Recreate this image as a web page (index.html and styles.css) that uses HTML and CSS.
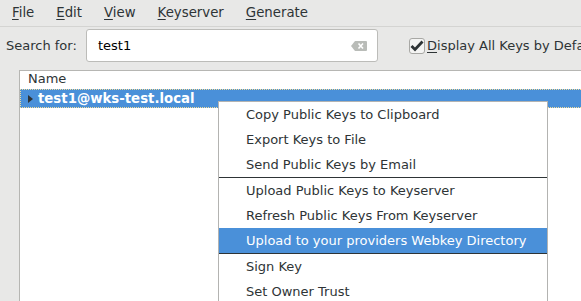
FILE: index.html
```html
<!DOCTYPE html>
<html lang="en">
<head>
    <meta charset="UTF-8">
    <title>Key Manager</title>
    <link rel="stylesheet" href="styles.css">
</head>
<body>

<div class="window">
    <div class="menubar">
        <span class="menu-item"><u>F</u>ile</span>
        <span class="menu-item"><u>E</u>dit</span>
        <span class="menu-item"><u>V</u>iew</span>
        <span class="menu-item"><u>K</u>eyserver</span>
        <span class="menu-item"><u>G</u>enerate</span>
    </div>

    <div class="search-row">
        <span class="search-label">Search for:</span>
        <div class="search-box">
            <span class="search-text">test1</span>
            <svg class="clear-icon" width="16" height="10" viewBox="0 0 16 10">
                <path d="M4 0 H15 a1 1 0 0 1 1 1 V9 a1 1 0 0 1 -1 1 H4 L0 5 Z" fill="#b9bcb8"/>
                <path d="M7.5 2.5 L12 7.5 M12 2.5 L7.5 7.5" stroke="#fff" stroke-width="1.6"/>
            </svg>
        </div>
        <label class="check">
            <span class="check-box">
                <svg width="14" height="12" viewBox="0 0 14 12">
                    <path d="M1.5 6 L5 9.5 L12.5 1.5" fill="none" stroke="#2e3436" stroke-width="2.8"/>
                </svg>
            </span>
            <span><u>D</u>isplay All Keys by Default</span>
        </label>
    </div>

    <div class="tree">
        <div class="tree-header">Name</div>
        <div class="tree-row selected">
            <span class="expander"></span>
            <span class="row-text">test1@wks-test.local</span>
        </div>
    </div>

    <div class="context-menu">
        <div class="ctx-item">Copy Public Keys to Clipboard</div>
        <div class="ctx-item">Export Keys to File</div>
        <div class="ctx-item">Send Public Keys by Email</div>
        <div class="ctx-sep"></div>
        <div class="ctx-item">Upload Public Keys to Keyserver</div>
        <div class="ctx-item">Refresh Public Keys From Keyserver</div>
        <div class="ctx-item active">Upload to your providers Webkey Directory</div>
        <div class="ctx-sep"></div>
        <div class="ctx-item">Sign Key</div>
        <div class="ctx-item">Set Owner Trust</div>
    </div>
</div>

</body>
</html>
```

FILE: styles.css
```css
* {
    margin: 0;
    padding: 0;
    box-sizing: border-box;
}

body {
    width: 581px;
    height: 301px;
    overflow: hidden;
    background-color: #e8e8e7;
    font-family: "DejaVu Sans", sans-serif;
    font-size: 13px;
    color: #2e3436;
}

.window {
    position: relative;
    height: 301px;
}

.menubar {
    display: flex;
    gap: 22px;
    height: 27px;
    padding: 4px 0 0 12px;
    border-bottom: 1px solid #d4d4d2;
    font-size: 13.3px;
    line-height: 18px;
}

.menu-item u {
    text-decoration-thickness: 1px;
    text-underline-offset: 2px;
}

.search-row {
    display: flex;
    align-items: flex-start;
    height: 43px;
    padding: 2px 0 0 6px;
    white-space: nowrap;
}

.search-label {
    display: flex;
    align-items: center;
    flex: none;
    width: 80px;
    height: 33px;
}

.search-box {
    display: flex;
    align-items: center;
    justify-content: space-between;
    flex: none;
    width: 292px;
    height: 33px;
    padding: 0 10px 0 11px;
    background-color: #fff;
    border: 1px solid #bcbcb9;
    border-radius: 3px;
    color: #000;
}

.clear-icon {
    display: block;
}

.check {
    display: flex;
    align-items: center;
    flex: none;
    height: 33px;
    margin-left: 31px;
}

.check-box {
    display: flex;
    align-items: center;
    justify-content: center;
    width: 16px;
    height: 16px;
    margin-right: 2px;
    border: 1px solid #a8a8a5;
    border-radius: 3px;
    background-color: #f4f4f3;
}

.check u {
    text-underline-offset: 2px;
}

.tree {
    margin-left: 19px;
    height: 240px;
    background-color: #fff;
    border-left: 1px solid #b6b6b3;
    border-top: 1px solid #b6b6b3;
}

.tree-header {
    height: 18px;
    padding-left: 8px;
    line-height: 16px;
}

.tree-row {
    display: flex;
    align-items: center;
    height: 19px;
    padding-left: 7px;
}

.tree-row.selected {
    background-color: #4a90d9;
    border-top: 1px dotted #f1dc9a;
    border-bottom: 1px dotted #f1dc9a;
    border-left: 1px dotted #f1dc9a;
    color: #fff;
    font-weight: bold;
}

.expander {
    width: 0;
    height: 0;
    margin-right: 5px;
    border-top: 4px solid transparent;
    border-bottom: 4px solid transparent;
    border-left: 5px solid #2e3436;
}

.row-text {
    font-size: 13.3px;
}

.context-menu {
    position: absolute;
    left: 218px;
    top: 101px;
    width: 330px;
    background-color: #fff;
    border: 1px solid #b3b3b1;
    border-bottom: none;
}

.ctx-item {
    height: 25px;
    padding-left: 27px;
    line-height: 25px;
    white-space: nowrap;
}

.ctx-item.active {
    background-color: #4a90d9;
    color: #fff;
}

.ctx-sep {
    height: 1px;
    background-color: #2e3436;
}
```
